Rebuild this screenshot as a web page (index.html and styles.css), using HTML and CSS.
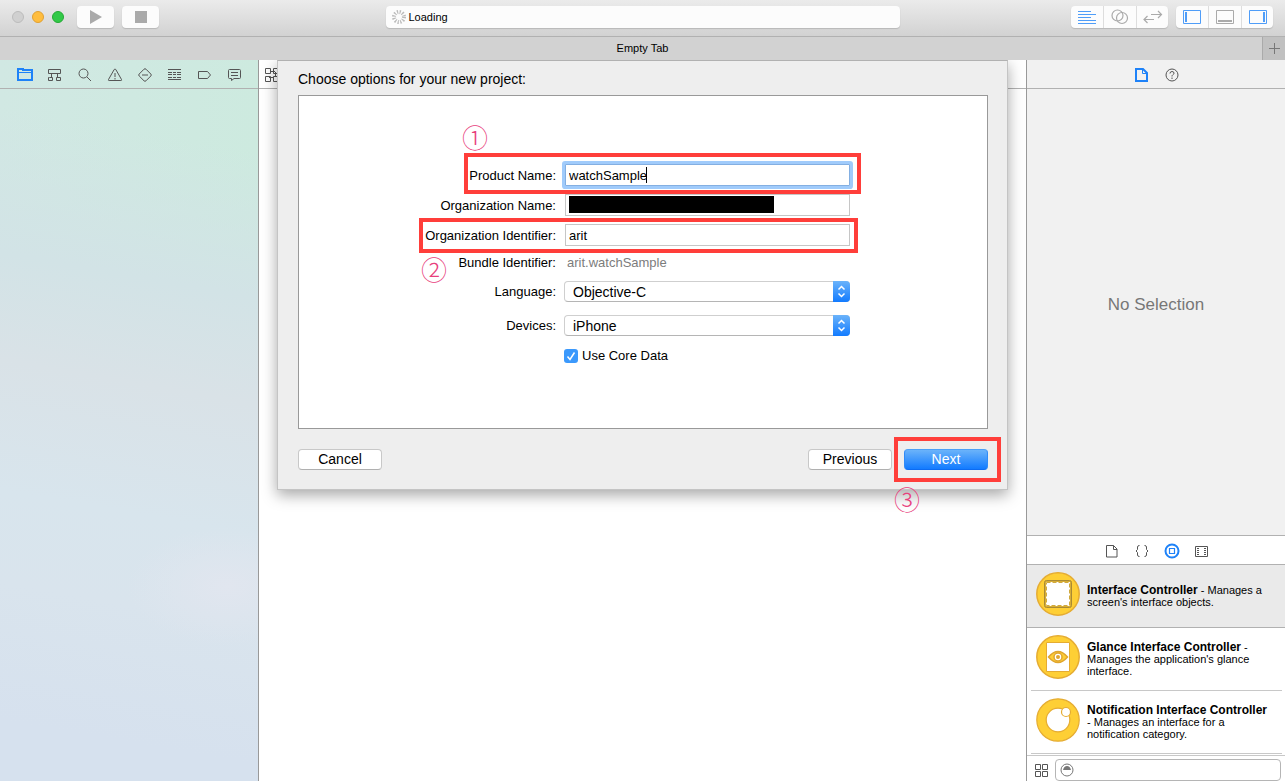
FILE: index.html
```html
<!DOCTYPE html>
<html lang="en">
<head>
    <meta charset="UTF-8">
    <meta name="viewport" content="width=device-width, initial-scale=1.0">
    <title>Empty Tab</title>
    <link rel="stylesheet" href="styles.css">
</head>
<body>
    <header class="titlebar">
        <div class="titlebar-left">
            <div class="lights">
                <span class="light"></span>
                <span class="light light-yellow"></span>
                <span class="light light-green"></span>
            </div>
            <button class="tool" aria-label="Run"><svg width="14" height="14"><path d="M1 0l12 7-12 7z" fill="#aaa"/></svg></button>
            <button class="tool" aria-label="Stop"><svg width="12" height="12"><path d="M0 0h12v12H0z" fill="#aaa"/></svg></button>
        </div>
        <div class="activity">
            <svg width="14" height="14" viewBox="0 0 14 14"><circle cx="7" cy="7" r="5" fill="none" stroke="#bbb" stroke-width="4" stroke-dasharray="1.2 1.418"/></svg>
            <span>Loading</span>
        </div>
        <div class="titlebar-right">
            <div class="segments">
                <button aria-label="Standard editor"><svg width="18" height="14"><path d="M0 1.5h13M0 4.500h18M0 7.500h13M0 10.500h18M0 13.500h18" stroke="#4f9df8"/></svg></button>
                <button aria-label="Assistant editor"><svg width="18" height="16" fill="none" stroke="#aaa" stroke-width="1.200"><circle cx="6.500" cy="6.500" r="5.500"/><circle cx="11" cy="9" r="5.500"/></svg></button>
                <button aria-label="Version editor"><svg width="20" height="14" fill="none" stroke="#aaa" stroke-width="1.200"><path d="M8 4.500h10.500M15 1l3.500 3.500L15 8M11 9.500H1M4.500 6L1 9.500 4.500 13"/></svg></button>
            </div>
            <div class="segments">
                <button aria-label="Navigator"><svg width="18" height="14" fill="none" stroke="#4f9df8"><path d="M.5.5h17v13H.5z"/><path d="M3 2v10" stroke-width="2"/></svg></button>
                <button aria-label="Debug area"><svg width="18" height="14" fill="none" stroke="#aaa"><path d="M.5.5h17v13H.5z"/><path d="M2 11h14" stroke-width="2"/></svg></button>
                <button aria-label="Utilities"><svg width="18" height="14" fill="none" stroke="#4f9df8"><path d="M.5.5h17v13H.5z"/><path d="M15 2v10" stroke-width="2"/></svg></button>
            </div>
        </div>
    </header>

    <div class="tabbar">
        <span class="tab">Empty Tab</span>
        <button class="tab-add" aria-label="New tab"><svg width="11" height="11"><path d="M5.500 0v11M0 5.500h11" stroke="#777"/></svg></button>
    </div>

    <div class="workspace">
        <nav class="navigator">
            <div class="iconbar">
                <button aria-label="Project"><svg width="16" height="16" fill="none" stroke="#1e82f8" stroke-width="2"><path d="M1 2h5v1H15v10H1z"/><path d="M2 5.500h12" stroke-width="1"/></svg></button>
                <button aria-label="Symbols"><svg width="16" height="16"><path d="M1.500 2.500h12v4h-12zM4.500 6.500v4M10.500 6.500v4M2.500 10.500h3v3h-4v-3zM9.500 10.500h4v3h-4z"/></svg></button>
                <button aria-label="Find"><svg width="16" height="16"><circle cx="6.500" cy="6.500" r="4.500"/><path d="M10 10l4 4"/></svg></button>
                <button aria-label="Issues"><svg width="16" height="16"><path d="M7.200 2.500L1.500 12.500q-.5 1 .6 1h11.800q1.100 0 .6-1L8.800 2.500q-.8-1-1.600 0zM8 6v4M8 11v1.500"/></svg></button>
                <button aria-label="Tests"><svg width="16" height="16"><path d="M7 2.200L2.200 7q-1 1 0 2L7 13.800q1 1 2 0L13.800 9q1-1 0-2L9 2.200q-1-1-2 0zM5 8h6"/></svg></button>
                <button aria-label="Debug"><svg width="16" height="16"><path d="M1 2.500h13M1 12.500h13"/><path d="M1 5.500h13M1 7.500h13M1 10.500h13" stroke-dasharray="4 1 3 1"/></svg></button>
                <button aria-label="Breakpoints"><svg width="16" height="16"><path d="M1.500 4.500h9l3 3.500-3 3.500h-9z"/></svg></button>
                <button aria-label="Reports"><svg width="16" height="16"><path d="M2.500 2.500h10q1 0 1 1v7q0 1-1 1H7L4.500 13.500v-2h-2q-1 0-1-1v-7q0-1 1-1zM4 5.500h7M4 8.500h7"/></svg></button>
            </div>
        </nav>

        <main class="editor">
            <div class="jumpbar">
                <button aria-label="Related items"><svg width="14" height="14"><path d="M.5.500h5v5h-5zM8.500.500h5v5h-5zM.5 8.500h5v5h-5zM8.500 8.500h5v5h-5zM6 3.500h4M10.500 4v5M4 9.500h5"/></svg></button>
            </div>
        </main>

        <aside class="utilities">
            <div class="iconbar">
                <button aria-label="File inspector"><svg width="16" height="16" fill="none" stroke="#1e82f8" stroke-width="2"><path d="M2 2h7l4 4v8H2z"/><path d="M8.500 3v3.500H12" stroke-width="1"/></svg></button>
                <button aria-label="Quick help"><svg width="16" height="16"><circle cx="8" cy="8" r="6"/><path d="M6 6.500q0-2 2-2t2 1.700q0 1-1.200 1.600Q8 8.200 8 9.500M8 10.500V12"/></svg></button>
            </div>
            <p class="empty">No Selection</p>
            <section class="library">
                <div class="iconbar">
                    <button aria-label="File templates"><svg width="16" height="16"><path d="M2.500 2.500h7l3.500 3.500v8H2.500zM9.500 2.500v4H13"/></svg></button>
                    <button aria-label="Code snippets"><svg width="16" height="16"><path d="M5.500 2.500q-2 0-2 1.500v2.500L2 8l1.500 1.500V12q0 1.500 2 1.500M10.500 2.500q2 0 2 1.500v2.500L14 8l-1.500 1.500V12q0 1.500-2 1.500"/></svg></button>
                    <button aria-label="Objects"><svg width="16" height="16" fill="none" stroke="#1e82f8"><circle cx="8" cy="8" r="6.500" stroke-width="2"/><path d="M5.500 5.500h5v5h-5z" stroke-width="1.200"/></svg></button>
                    <button aria-label="Media"><svg width="16" height="16"><path d="M1.500 3.500h12v10h-12z"/><path d="M4 5v8M11 5v8" stroke-dasharray="1 1" stroke-width="2"/></svg></button>
                </div>
                <ul class="objects">
                    <li class="selected">
                        <svg width="44" height="44"><circle cx="22" cy="22" r="21.200" fill="#fecf35" stroke="#e5ac32" stroke-width="1.500"/><rect x="8.500" y="8.500" width="27" height="27" rx="2" fill="#d8ae35" stroke="#a98a35"/><path d="M10 10h24v24H10z" fill="#fff"/><path d="M10.500 10.500h23v23h-23z" fill="none" stroke="#d0a93e" stroke-dasharray="4 2"/></svg>
                        <p><b>Interface Controller</b> - Manages a screen's interface objects.</p>
                    </li>
                    <li>
                        <svg width="44" height="44"><circle cx="22" cy="22" r="21.200" fill="#fecf35" stroke="#e5ac32" stroke-width="1.500"/><path d="M10.500 7.500h23v29h-23z" fill="#fff" stroke="#e5ac32"/><path d="M12.500 22q9.500-11 19 0-9.500 11-19 0z" fill="#fecf35" stroke="#e0a52f" stroke-width="1.500"/><circle cx="22" cy="22" r="4" fill="#fff" stroke="#e0a52f" stroke-width="1.500"/><circle cx="22" cy="22" r="2" fill="#e0a52f"/></svg>
                        <p><b>Glance Interface Controller</b> - Manages the application's glance interface.</p>
                    </li>
                    <li>
                        <svg width="44" height="44" stroke="#e5ac32" stroke-width="1.200"><circle cx="22" cy="22" r="21.200" fill="#fecf35"/><circle cx="22" cy="22" r="11.800" fill="#fff"/><circle cx="30" cy="14" r="4.500" fill="#fff"/></svg>
                        <p><b>Notification Interface Controller</b> - Manages an interface for a notification category.</p>
                    </li>
                </ul>
                <div class="filterbar">
                    <button aria-label="Icon view"><svg width="13" height="13"><path d="M.5.500h5v5h-5zM7.500.500h5v5h-5zM.5 7.500h5v5h-5zM7.500 7.500h5v5h-5z"/></svg></button>
                    <div class="filter">
                        <svg width="14" height="14"><circle cx="7" cy="7" r="6" fill="none" stroke="#777"/><path d="M3 7q1-4 4-4t4 4z" fill="#777"/></svg>
                        <input type="text" aria-label="Filter">
                    </div>
                </div>
            </section>
        </aside>

        <form class="sheet" onsubmit="return false">
            <h1>Choose options for your new project:</h1>
            <div class="panel">
                <div class="fields">
                    <label for="product">Product Name:</label>
                    <div class="field"><input class="focused" type="text" id="product" value="watchSample"><i class="caret"></i></div>

                    <label for="organization">Organization Name:</label>
                    <div class="field"><input type="text" id="organization"><span class="redacted"></span></div>

                    <label for="identifier">Organization Identifier:</label>
                    <div class="field"><input type="text" id="identifier" value="arit"></div>

                    <span class="caption">Bundle Identifier:</span>
                    <span class="bundle">arit.watchSample</span>

                    <label class="popup-label" for="language">Language:</label>
                    <div class="popup">
                        <select id="language"><option>Objective-C</option><option>Swift</option></select>
                        <span class="arrows"><svg width="9" height="13"><path d="M1.500 4.500l3-3 3 3M1.500 8.500l3 3 3-3"/></svg></span>
                    </div>

                    <label class="popup-label spaced" for="devices">Devices:</label>
                    <div class="popup spaced">
                        <select id="devices"><option>iPhone</option><option>iPad</option><option>Universal</option></select>
                        <span class="arrows"><svg width="9" height="13"><path d="M1.500 4.500l3-3 3 3M1.500 8.500l3 3 3-3"/></svg></span>
                    </div>

                    <label class="check spaced">
                        <input type="checkbox" checked>
                        <svg width="14" height="14"><path d="M3.500 7.500l2.500 3 4.500-7"/></svg>
                        Use Core Data
                    </label>
                </div>
            </div>
            <div class="buttons">
                <button type="button">Cancel</button>
                <button type="button" class="previous">Previous</button>
                <button type="submit" class="primary">Next</button>
            </div>

            <!-- step markers -->
            <div class="mark mark-product"></div>
            <div class="mark mark-identifier"></div>
            <div class="mark mark-next"></div>
            <span class="step step-1">①</span>
            <span class="step step-2">②</span>
            <span class="step step-3">③</span>
        </form>
    </div>
</body>
</html>
```
FILE: styles.css
```css
* {
    box-sizing: border-box;
}
body {
    margin: 0;
    height: 100vh;
    display: flex;
    flex-direction: column;
    overflow: hidden;
    font-family: "Liberation Sans", Arial, sans-serif;
    font-size: 13px;
    color: #000;
}
button, input, select {
    font: inherit;
    color: inherit;
}
button {
    padding: 0;
    border: none;
    background: none;
}
svg {
    display: block;
    flex: none;
}

/* title bar */
.titlebar {
    display: flex;
    align-items: center;
    height: 37px;
    padding-bottom: 2px;
    background: linear-gradient(#ebebeb, #d2d2d2);
    border-bottom: 1px solid #b1b1b1;
}
.titlebar-left, .titlebar-right {
    flex: 1;
    display: flex;
    align-items: center;
    gap: 8px;
}
.titlebar-left {
    padding-left: 12px;
}
.titlebar-right {
    justify-content: flex-end;
    padding-right: 12px;
}
.lights {
    display: flex;
    gap: 8px;
    margin-right: 5px;
}
.light {
    width: 12px;
    height: 12px;
    border: 1px solid #bcbcbc;
    border-radius: 50%;
    background: #d0d0d0;
}
.light-yellow {
    background: #ffbd3e;
    border-color: #e0a033;
}
.light-green {
    background: #32c948;
    border-color: #24a934;
}
.tool, .activity, .segments {
    height: 22px;
    border-radius: 4px;
    background: #fcfcfc;
    box-shadow: 0 1px 1px #b8b8b8;
}
.tool {
    width: 37px;
    display: grid;
    place-items: center;
}
.activity {
    width: 40%;
    display: flex;
    align-items: center;
    gap: 3px;
    padding-left: 6px;
    font-size: 11px;
}
.segments {
    display: flex;
}
.segments button {
    width: 32px;
    display: grid;
    place-items: center;
}
.segments button + button {
    width: 33px;
    border-left: 1px solid #ddd;
}
.segments button:last-child {
    width: 32px;
}

/* tabs */
.tabbar {
    display: flex;
    height: 23px;
    background: #d2d2d2;
}
.tab {
    flex: 1;
    padding-left: 23px;
    line-height: 22px;
    text-align: center;
    font-size: 11px;
}
.tab-add {
    width: 23px;
    display: grid;
    place-items: center;
    background: #c1c1c1;
    border-left: 1px solid #aaa;
}

/* columns */
.workspace {
    position: relative;
    flex: 1;
    min-height: 0;
    display: flex;
}
.navigator {
    width: 259px;
    border-right: 1px solid #999;
    background:
        radial-gradient(ellipse 100px 60px at 88% 73%, #e1e6ef, rgba(225, 230, 239, 0)),
        linear-gradient(190deg, rgba(210, 227, 230, 0) 12%, #d2e3e6 31%, #d9e2e7 45%, #d8e5ed 62%, #d9e4ed 74%, #d6e1ee 92%),
        linear-gradient(90deg, #d1e8e3, #cdeadf);
}
.editor {
    flex: 1;
    background: #fff;
}
.utilities {
    width: 259px;
    display: flex;
    flex-direction: column;
    border-left: 1px solid #999;
    background: #f1f1f1;
}
.iconbar, .jumpbar {
    height: 29px;
    display: flex;
    justify-content: center;
    padding: 1px 0 0 1px;
    border-bottom: 1px solid #b1b1b1;
}
.jumpbar {
    justify-content: flex-start;
    padding-left: 6px;
}
.iconbar button, .jumpbar button, .filterbar button {
    display: grid;
    place-items: center;
    fill: none;
    stroke: #555;
}
.iconbar button {
    width: 30px;
}
.jumpbar button {
    width: 14px;
}
.empty {
    flex: 1;
    display: flex;
    align-items: center;
    justify-content: center;
    margin: 0;
    padding-bottom: 14px;
    font-size: 17px;
    color: #777;
}

/* object library */
.library {
    border-top: 1px solid #b1b1b1;
    background: #fff;
}
.objects {
    margin: 0;
    padding: 0 0 1px;
    list-style: none;
    font-size: 11px;
    line-height: 12px;
}
.objects li {
    height: 63px;
    display: flex;
    align-items: center;
    gap: 7px;
    margin: 0 3px 0 4px;
    padding-left: 5px;
    border-bottom: 1px solid #c8c8c8;
}
.objects .selected {
    margin: 0;
    padding-left: 9px;
    background: #eaeaea;
    border-color: #b1b1b1;
}
.objects svg {
    margin-bottom: 4px;
}
.objects p {
    margin: 0;
    width: 182px;
}
.objects b {
    font-size: 12px;
}
.filterbar {
    display: flex;
    align-items: center;
    gap: 7px;
    height: 26px;
    padding: 3px 4px 0 8px;
    border-top: 1px solid #c8c8c8;
}
.filter {
    flex: 1;
    display: flex;
    align-items: center;
    height: 22px;
    padding-left: 4px;
    border: 1px solid #b5b5b5;
    border-radius: 4px;
}
.filter input {
    flex: 1;
    min-width: 0;
    height: 18px;
    border: none;
    outline: none;
    background: none;
}

/* new project sheet */
.sheet {
    position: absolute;
    top: 0;
    left: 0;
    right: 0;
    width: 731px;
    margin: 0 auto;
    padding: 10px 19px 19px 20px;
    background: #eee;
    border: 1px solid #c4c4c4;
    border-top-color: #b1b1b1;
    box-shadow: 0 5px 14px rgba(0, 0, 0, .35);
    clip-path: inset(0 -30px -30px -30px);
}
.sheet h1 {
    margin: 0 0 8px;
    font-size: 14px;
    font-weight: normal;
    line-height: 16px;
}
.panel {
    height: 334px;
    padding: 68px 137px 0 0;
    border: 1px solid #999;
    background: #fff;
}
.fields {
    display: grid;
    grid-template-columns: 1fr 286px;
    gap: 8px;
    text-align: right;
    line-height: 24px;
    grid-template-rows: 22px 22px 22px 19px 21px;
}
.spaced {
    margin-top: 5px;
}
.field {
    position: relative;
    padding-left: 1px;
}
.field input {
    display: block;
    width: 100%;
    height: 22px;
    padding: 2px 3px 0;
    border: 1px solid #c6c6c6;
    outline: none;
    background: #fff;
}
.field .focused {
    border-color: #83afe2;
    box-shadow: 0 0 0 3px #a0cbfb;
    border-radius: 1px;
}
.caret {
    position: absolute;
    left: 82px;
    top: 3px;
    width: 1px;
    height: 16px;
    background: #000;
}
.redacted {
    position: absolute;
    left: 5px;
    top: 2px;
    width: 205px;
    height: 17px;
    background: #000;
}
.caption, .bundle {
    line-height: 17px;
}
.bundle {
    padding-left: 3px;
    text-align: left;
    color: #7c7c7c;
}
.popup, .popup-label {
    height: 21px;
    line-height: 21px;
}
.popup {
    position: relative;
}
.popup select {
    display: block;
    width: 100%;
    height: 21px;
    padding: 0 8px 1px;
    font-size: 14px;
    appearance: none;
    border: 1px solid #cfcfcf;
    border-bottom-color: #b5b5b5;
    border-radius: 4px;
    background: #fff;
}
.arrows {
    position: absolute;
    top: 0;
    right: 0;
    width: 17px;
    height: 21px;
    display: grid;
    place-items: center;
    border-radius: 0 4px 4px 0;
    background: linear-gradient(#6bb3fa, #127bff);
    pointer-events: none;
}
.arrows svg, .check svg {
    fill: none;
    stroke: #fff;
    stroke-width: 1.5;
}
.check {
    grid-column: 2;
    position: relative;
    display: flex;
    align-items: center;
    gap: 4px;
    height: 14px;
    line-height: 14px;
}
.check input {
    width: 14px;
    height: 14px;
    margin: 0;
    appearance: none;
    border-radius: 3px;
    background: #3b99fc;
}
.check svg {
    position: absolute;
    left: 0;
    top: 0;
}
.buttons {
    display: flex;
    gap: 12px;
    margin-top: 20px;
}
.buttons button {
    width: 84px;
    height: 21px;
    font-size: 14px;
    line-height: 19px;
    border: 1px solid #c8c8c8;
    border-bottom-color: #b0b0b0;
    border-radius: 4px;
    background: #fff;
}
.buttons .previous {
    margin-left: auto;
}
.buttons .primary {
    color: #fff;
    border-color: #4a9ff8 #2f8bf8 #0d6cf2;
    background: linear-gradient(#6bb3fa, #127bff);
}

/* step markers */
.mark {
    position: absolute;
    border: 4px solid #ff3e3a;
    pointer-events: none;
}
.mark-product {
    left: 186px;
    top: 92px;
    width: 397px;
    height: 41px;
}
.mark-identifier {
    left: 141px;
    top: 157px;
    width: 439px;
    height: 35px;
}
.mark-next {
    left: 616px;
    top: 376px;
    width: 107px;
    height: 45px;
}
.step {
    position: absolute;
    font-family: "Noto Sans CJK JP", sans-serif;
    font-size: 26px;
    font-weight: 300;
    line-height: 28px;
    color: #e8407c;
}
.step-1 {
    left: 184px;
    top: 62px;
}
.step-2 {
    left: 143px;
    top: 194px;
}
.step-3 {
    left: 616px;
    top: 424px;
}
```
